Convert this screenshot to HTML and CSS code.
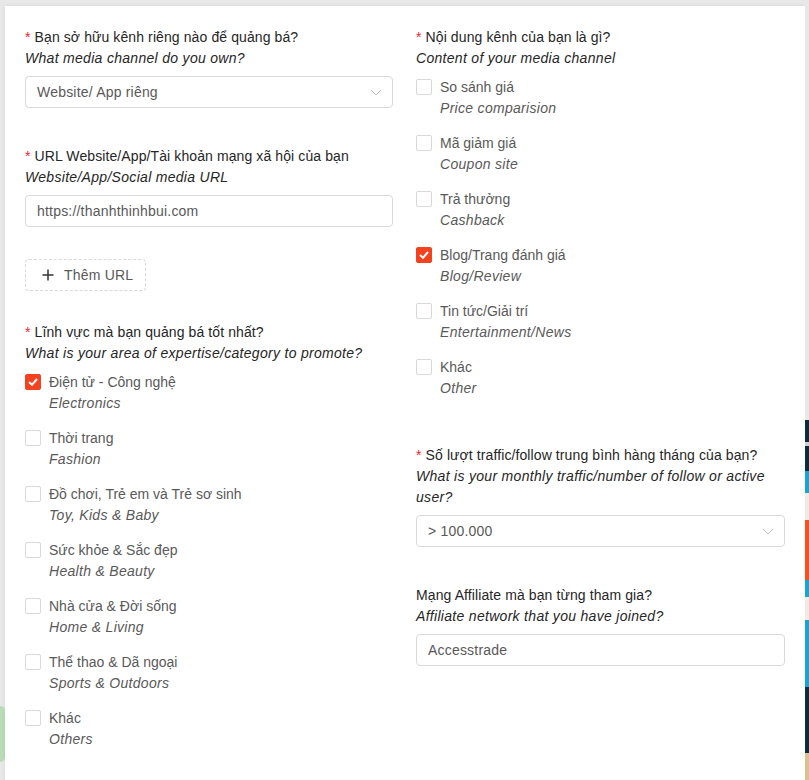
FILE: index.html
```html
<!DOCTYPE html>
<html lang="vi">
<head>
    <meta charset="UTF-8">
    <meta name="viewport" content="width=device-width, initial-scale=1.0">
    <title>Đăng ký Publisher</title>
    <link rel="stylesheet" href="styles.css">
</head>
<body>
    <div class="side side-left">
        <div class="blob"></div>
    </div>

    <div class="panel">
        <div class="form-grid">
            <!-- Left column -->
            <div class="col">
                <div class="field">
                    <div class="label required">Bạn sở hữu kênh riêng nào để quảng bá?</div>
                    <div class="label-en">What media channel do you own?</div>
                    <div class="select">
                        <span>Website/ App riêng</span>
                        <svg class="chevron" width="12" height="12" viewBox="0 0 12 12"><path d="M1 4 L6 9 L11 4" fill="none" stroke="#bfbfbf" stroke-width="1"/></svg>
                    </div>
                </div>

                <div class="field field-url">
                    <div class="label required">URL Website/App/Tài khoản mạng xã hội của bạn</div>
                    <div class="label-en">Website/App/Social media URL</div>
                    <div class="input">https://thanhthinhbui.com</div>
                </div>

                <button class="add-btn">
                    <svg class="plus" width="12" height="12" viewBox="0 0 12 12"><path d="M6 0.5 V11.5 M0.5 6 H11.5" stroke="#333" stroke-width="1.5"/></svg>
                    <span>Thêm URL</span>
                </button>

                <div class="field">
                    <div class="label required">Lĩnh vực mà bạn quảng bá tốt nhất?</div>
                    <div class="label-en">What is your area of expertise/category to promote?</div>
                    <div class="checks">
                        <div class="check-item">
                            <span class="box checked"><svg width="10" height="8" viewBox="0 0 10 8"><path d="M1 4 L4 6.8 L9 1" fill="none" stroke="#fff" stroke-width="2"/></svg></span>
                            <div><div>Điện tử - Công nghệ</div><div class="en">Electronics</div></div>
                        </div>
                        <div class="check-item">
                            <span class="box"></span>
                            <div><div>Thời trang</div><div class="en">Fashion</div></div>
                        </div>
                        <div class="check-item">
                            <span class="box"></span>
                            <div><div>Đồ chơi, Trẻ em và Trẻ sơ sinh</div><div class="en">Toy, Kids &amp; Baby</div></div>
                        </div>
                        <div class="check-item">
                            <span class="box"></span>
                            <div><div>Sức khỏe &amp; Sắc đẹp</div><div class="en">Health &amp; Beauty</div></div>
                        </div>
                        <div class="check-item">
                            <span class="box"></span>
                            <div><div>Nhà cửa &amp; Đời sống</div><div class="en">Home &amp; Living</div></div>
                        </div>
                        <div class="check-item">
                            <span class="box"></span>
                            <div><div>Thể thao &amp; Dã ngoại</div><div class="en">Sports &amp; Outdoors</div></div>
                        </div>
                        <div class="check-item">
                            <span class="box"></span>
                            <div><div>Khác</div><div class="en">Others</div></div>
                        </div>
                    </div>
                </div>
            </div>

            <!-- Right column -->
            <div class="col">
                <div class="field field-content">
                    <div class="label required">Nội dung kênh của bạn là gì?</div>
                    <div class="label-en">Content of your media channel</div>
                    <div class="checks">
                        <div class="check-item">
                            <span class="box"></span>
                            <div><div>So sánh giá</div><div class="en">Price comparision</div></div>
                        </div>
                        <div class="check-item">
                            <span class="box"></span>
                            <div><div>Mã giảm giá</div><div class="en">Coupon site</div></div>
                        </div>
                        <div class="check-item">
                            <span class="box"></span>
                            <div><div>Trả thưởng</div><div class="en">Cashback</div></div>
                        </div>
                        <div class="check-item">
                            <span class="box checked"><svg width="10" height="8" viewBox="0 0 10 8"><path d="M1 4 L4 6.8 L9 1" fill="none" stroke="#fff" stroke-width="2"/></svg></span>
                            <div><div>Blog/Trang đánh giá</div><div class="en">Blog/Review</div></div>
                        </div>
                        <div class="check-item">
                            <span class="box"></span>
                            <div><div>Tin tức/Giải trí</div><div class="en">Entertainment/News</div></div>
                        </div>
                        <div class="check-item">
                            <span class="box"></span>
                            <div><div>Khác</div><div class="en">Other</div></div>
                        </div>
                    </div>
                </div>

                <div class="field">
                    <div class="label required">Số lượt traffic/follow trung bình hàng tháng của bạn?</div>
                    <div class="label-en">What is your monthly traffic/number of follow or active user?</div>
                    <div class="select">
                        <span>&gt; 100.000</span>
                        <svg class="chevron" width="12" height="12" viewBox="0 0 12 12"><path d="M1 4 L6 9 L11 4" fill="none" stroke="#bfbfbf" stroke-width="1"/></svg>
                    </div>
                </div>

                <div class="field">
                    <div class="label">Mạng Affiliate mà bạn từng tham gia?</div>
                    <div class="label-en">Affiliate network that you have joined?</div>
                    <div class="input">Accesstrade</div>
                </div>
            </div>
        </div>
    </div>

    <div class="side side-right">
        <div class="strip grey"></div>
        <div class="strip navy" style="height: 22px"></div>
        <div class="strip light" style="height: 4px"></div>
        <div class="strip navy" style="height: 25px"></div>
        <div class="strip blue" style="height: 22px"></div>
        <div class="strip white" style="height: 27px"></div>
        <div class="strip orange" style="height: 60px"></div>
        <div class="strip blue" style="height: 17px"></div>
        <div class="strip white" style="height: 23px"></div>
        <div class="strip blue" style="height: 67px"></div>
        <div class="strip navy" style="height: 66px"></div>
        <div class="strip tan"></div>
    </div>
</body>
</html>
```

FILE: styles.css
```css
* {
    margin: 0;
    padding: 0;
    box-sizing: border-box;
}

body {
    font-family: 'Liberation Sans', Arial, sans-serif;
    font-size: 14px;
    line-height: 21px;
    color: #262626;
    background: #e8e8e8;
    height: 780px;
    overflow: hidden;
    display: flex;
    padding-top: 6px;
}

.side {
    flex: none;
    display: flex;
    flex-direction: column;
}

.side-left {
    width: 5px;
    padding-top: 700px;
}

.blob {
    width: 5px;
    height: 56px;
    background: #b8dcb8;
    border-radius: 0 8px 8px 0;
}

.side-right {
    width: 4px;
    margin-top: -6px;
}

.strip {
    width: 4px;
}

.strip.grey {
    height: 420px;
    background: #e8e8e8;
}

.strip.navy { background: #0c2c3d; }
.strip.light { background: #c9d3d8; }
.strip.blue { background: #18a3d0; }
.strip.white { background: #f3e8e2; }
.strip.orange { background: #f4511e; }
.strip.tan {
    flex: 1;
    background: #dcc08e;
}

.panel {
    flex: none;
    width: 800px;
    background: #fff;
    padding: 21px 20px 0;
    box-shadow: 0 0 4px rgba(0, 0, 0, 0.08);
}

.form-grid {
    display: grid;
    grid-template-columns: 368px 369px;
    column-gap: 23px;
}

.field {
    margin-bottom: 38px;
}

.field-url {
    margin-bottom: 32px;
}

.field-content {
    margin-bottom: 46px;
}

.label {
    letter-spacing: 0.1px;
}

.label.required::before {
    content: '*';
    color: #f5222d;
    margin-right: 4px;
}

.label-en {
    font-style: italic;
    letter-spacing: 0.3px;
}

.select,
.input {
    margin-top: 7px;
    height: 32px;
    border: 1px solid #d9d9d9;
    border-radius: 4px;
    padding: 0 11px;
    display: flex;
    align-items: center;
    justify-content: space-between;
    color: #595959;
    letter-spacing: 0.2px;
}

.chevron {
    flex: none;
    margin-right: -1px;
}

.add-btn {
    display: flex;
    align-items: center;
    gap: 10px;
    width: 121px;
    height: 32px;
    padding: 0 16px;
    border: 1px dashed #d9d9d9;
    border-radius: 4px;
    background: #fff;
    font-family: inherit;
    font-size: 14px;
    color: #595959;
    white-space: nowrap;
    letter-spacing: 0.2px;
    margin-bottom: 31px;
}

.plus {
    flex: none;
}

.checks {
    margin-top: 8px;
    display: flex;
    flex-direction: column;
    gap: 14px;
}

.check-item {
    display: flex;
    gap: 8px;
    color: #595959;
}

.check-item .en {
    font-style: italic;
    letter-spacing: 0.3px;
}

.box {
    flex: none;
    width: 16px;
    height: 16px;
    margin-top: 2px;
    border: 1px solid #d9d9d9;
    border-radius: 2px;
    background: #fff;
    display: flex;
    align-items: center;
    justify-content: center;
}

.box.checked {
    background: #f4421e;
    border-color: #f4421e;
}
```
